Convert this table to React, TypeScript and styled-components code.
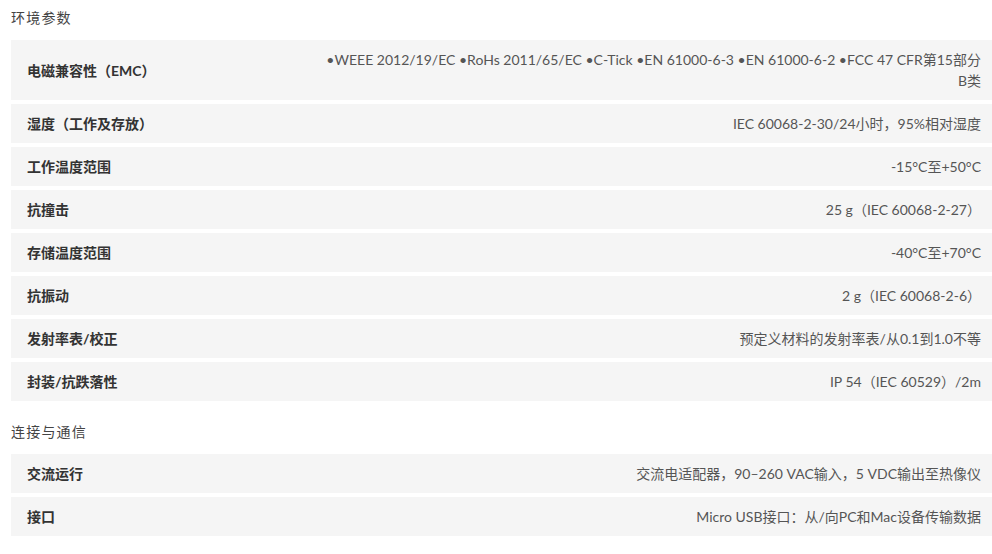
import React from 'react'
import styled, { createGlobalStyle } from 'styled-components'

interface Spec {
  label: string
  value: React.ReactNode
}

const environment: Spec[] = [
  {
    label: '电磁兼容性（EMC）',
    value: (
      <>
        •WEEE 2012/19/EC •RoHs 2011/65/EC •C-Tick •EN 61000-6-3 •EN 61000-6-2 •FCC 47 CFR第15部分
        <br />
        B类
      </>
    ),
  },
  { label: '湿度（工作及存放）', value: 'IEC 60068-2-30/24小时，95%相对湿度' },
  { label: '工作温度范围', value: '-15°C至+50°C' },
  { label: '抗撞击', value: '25 g（IEC 60068-2-27）' },
  { label: '存储温度范围', value: '-40°C至+70°C' },
  { label: '抗振动', value: '2 g（IEC 60068-2-6）' },
  { label: '发射率表/校正', value: '预定义材料的发射率表/从0.1到1.0不等' },
  { label: '封装/抗跌落性', value: 'IP 54（IEC 60529）/2m' },
]

const connectivity: Spec[] = [
  { label: '交流运行', value: '交流电适配器，90–260 VAC输入，5 VDC输出至热像仪' },
  { label: '接口', value: 'Micro USB接口：从/向PC和Mac设备传输数据' },
]

const GlobalStyle = createGlobalStyle`
  body {
    margin: 0;
    background: #fff;
    font-family: Lato, "Noto Sans CJK SC", sans-serif;
    -webkit-font-smoothing: antialiased;
  }
`

const Page = styled.div`
  padding: 7px 0 0 11px;
`

const Section = styled.section`
  & + & {
    margin-top: 20px;
  }
`

const Heading = styled.h3`
  margin: 0 0 11px;
  font-size: 14px;
  line-height: 22px;
  font-weight: 400;
  letter-spacing: 1.2px;
  color: #444;
`

const List = styled.div`
  display: flex;
  flex-direction: column;
  gap: 4px;
`

const Row = styled.div`
  display: flex;
  justify-content: space-between;
  align-items: center;
  gap: 24px;
  background: #f5f5f5;
  padding: 9px 11px 9px 16px;
  font-size: 14px;
  line-height: 21px;
`

const Label = styled.div`
  flex: none;
  font-weight: 700;
  color: #333;
`

const Value = styled.div`
  text-align: right;
  color: #555;
`

const SpecSection: React.FC<{ title: string; items: Spec[] }> = ({ title, items }) => (
  <Section>
    <Heading>{title}</Heading>
    <List>
      {items.map((item) => (
        <Row key={item.label}>
          <Label>{item.label}</Label>
          <Value>{item.value}</Value>
        </Row>
      ))}
    </List>
  </Section>
)

const App: React.FC = () => (
  <>
    <GlobalStyle />
    <Page>
      <SpecSection title="环境参数" items={environment} />
      <SpecSection title="连接与通信" items={connectivity} />
    </Page>
  </>
)

export default App
